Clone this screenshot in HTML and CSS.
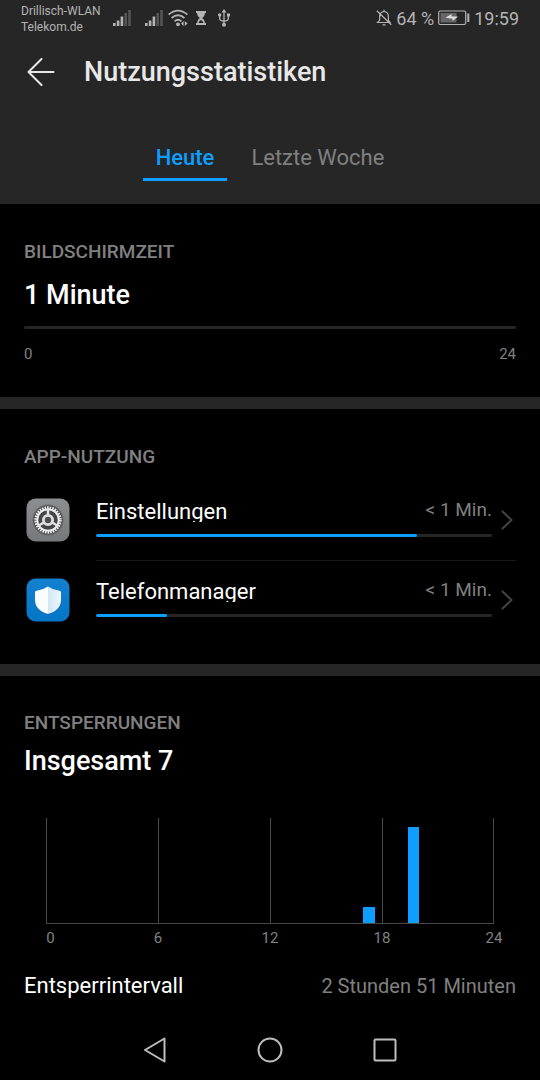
FILE: index.html
```html
<!DOCTYPE html>
<html lang="de">
<head>
<meta charset="utf-8">
<meta name="viewport" content="width=device-width, initial-scale=1">
<title>Nutzungsstatistiken</title>
<link rel="stylesheet" href="styles.css">
</head>
<body>
<div class="screen">
  <header class="header">
    <div class="status">
      <div class="carriers"><span>Drillisch-WLAN</span><span>Telekom.de</span></div>
      <svg class="signal" width="18" height="18" viewBox="0 0 18 18" aria-hidden="true">
        <path fill="#b4b4b4" d="M0 14h2.600v3H0zM3.800 11.500h2.600V17H3.800zM7.600 7.500h2.600V17H7.600z"/><path fill="#535655" d="M11.400 4h2.600v13h-2.600zM15.200 1h2.600v16h-2.600z"/>
      </svg>
      <svg class="signal" width="18" height="18" viewBox="0 0 18 18" aria-hidden="true">
        <path fill="#b4b4b4" d="M0 14h2.600v3H0zM3.800 11.500h2.600V17H3.800zM7.600 7.500h2.600V17H7.600z"/><path fill="#535655" d="M11.400 4h2.600v13h-2.600zM15.200 1h2.600v16h-2.600z"/>
      </svg>
      <svg class="wifi" width="20" height="18" viewBox="0 0 20 18" aria-hidden="true">
        <g fill="none" stroke="#b4b4b4" stroke-width="1.800"><path d="M.6 5.600Q10-2.400 19.400 5.600"/><path d="M3.600 9Q10 3.600 16.400 9"/><path d="M6.600 12.300Q10 9.300 13.400 12.300"/></g>
        <circle cx="10" cy="15.300" r="1.900" fill="#b4b4b4"/><path fill="#b4b4b4" d="M15.600 12v5L13 14.500zM16.800 12v5l2.800-2.500z"/>
      </svg>
      <svg class="glass" width="10" height="14" viewBox="0 0 10 14" aria-hidden="true">
        <path fill="#b4b4b4" d="M0 0h10v2H9q0 3-2.800 5Q9 9 9 12h1v2H0v-2h1q0-3 2.800-5Q1 5 1 2H0z"/><path fill="#262626" d="M2.600 12q.4-2 2.400-3 2 1 2.400 3z"/>
      </svg>
      <svg class="usb" width="12" height="18" viewBox="0 0 12 18" aria-hidden="true">
        <g fill="none" stroke="#b4b4b4" stroke-width="1.300"><path d="M6 2v14M1.700 6v3.500q0 2.500 4.300 2.500 4.300 0 4.300-2.500V6"/></g>
        <path fill="#b4b4b4" d="M6 0l2.500 3.500h-5zM9 4.500h3v3H9z"/><circle cx="1.700" cy="6" r="1.700" fill="#b4b4b4"/><circle cx="6" cy="15.800" r="2" fill="#b4b4b4"/>
      </svg>
      <div class="status-right">
        <svg width="16" height="18" viewBox="0 0 16 18" fill="none" stroke="#b4b4b4" stroke-width="1.200" aria-hidden="true">
          <path d="M1.500 13.500h12.500l-1.600-2.200V7.500Q12.400 3 8 2.500 3.600 3 3.600 7.500v3.800zM8 2.500V.8M6.500 15.800h3M.8 1.800l14.500 14"/>
        </svg>
        <span>64 %</span>
        <svg width="32" height="16" viewBox="0 0 32 16" aria-hidden="true">
          <rect x=".7" y="1" width="27" height="13.500" rx="1.500" fill="none" stroke="#b4b4b4" stroke-width="1.200"/>
          <path fill="#666" d="M2.500 3h16v9.500h-16z"/><path fill="#b4b4b4" d="M29.300 3.500h2v8.500h-2z"/>
          <path fill="#ddd" d="M13.500 4v2.600h6.500L14.500 11V8.800L7.500 7.800z"/>
        </svg>
        <span>19:59</span>
      </div>
    </div>
    <div class="title-bar">
      <button class="back" aria-label="Zurück">
        <svg width="28" height="28" viewBox="0 0 28 28" fill="none" stroke="#e8e8e8" stroke-width="2" stroke-linecap="round" stroke-linejoin="round"><path d="M14.500 1L1.500 14l13 13M1.500 14h25"/></svg>
      </button>
      <h1>Nutzungsstatistiken</h1>
    </div>
    <nav class="tabs">
      <button class="tab active">Heute</button>
      <button class="tab">Letzte Woche</button>
    </nav>
  </header>

  <main>
    <section class="card">
      <h2>BILDSCHIRMZEIT</h2>
      <p class="value time-value">1 Minute</p>
      <div class="track"></div>
      <div class="range"><span>0</span><span>24</span></div>
    </section>

    <section class="card apps">
      <h2>APP-NUTZUNG</h2>
      <ul>
        <li class="app">
          <svg class="app-icon" width="44" height="44" viewBox="0 0 44 44" aria-hidden="true">
            <defs><linearGradient id="gray" x2="0" y2="1"><stop stop-color="#8d8e90"/><stop offset="1" stop-color="#77787a"/></linearGradient></defs>
            <rect x=".5" y=".5" width="43" height="43" rx="9" fill="url(#gray)"/>
            <circle cx="22" cy="22" r="15.500" fill="#656668"/>
            <circle cx="22" cy="22" r="14.300" fill="#454547"/>
            <circle cx="22" cy="22" r="12.200" fill="none" stroke="#efefef" stroke-width="3" stroke-dasharray="1.600 .955"/>
            <circle cx="22" cy="22" r="10.700" fill="none" stroke="#efefef" stroke-width="1.800"/>
            <path d="M22 22V10M22 22l10 6M22 22l-10 6" stroke="#e4e4e4" stroke-width="2.400"/>
            <circle cx="22" cy="22" r="4.600" fill="#4d4d4f" stroke="#dedede" stroke-width="2.800"/>
          </svg>
          <div class="usage">
            <div class="usage-text"><span class="name">Einstellungen</span><span class="duration">&lt; 1 Min.</span></div>
            <div class="track"><div class="fill" style="width:81%"></div></div>
          </div>
          <svg class="chevron" width="12" height="20" viewBox="0 0 12 20" aria-hidden="true"><path d="M1 1l9.500 9L1 19"/></svg>
        </li>
        <li class="app">
          <svg class="app-icon" width="44" height="44" viewBox="0 0 44 44" aria-hidden="true">
            <defs>
              <linearGradient id="blue" x2="0" y2="1"><stop stop-color="#1480cf"/><stop offset="1" stop-color="#0475c7"/></linearGradient>
              <linearGradient id="half" x2="1" y2="0"><stop stop-color="#d3e6f3"/><stop offset="1" stop-color="#eef6fb"/></linearGradient>
            </defs>
            <rect x=".5" y=".5" width="43" height="43" rx="9" fill="url(#blue)"/>
            <path fill="#0868b0" d="M22 10q6 4 13 4.500v9q0 9-13 13.500Q9 32.500 9 23.500v-9q7-.5 13-4.500z"/>
            <path fill="#fafdff" d="M22 8.500q-5 3.500-11.500 4.200-1.500.2-1.500 1.800V22q0 10 13 14z"/>
            <path fill="url(#half)" d="M22 8.500q5 3.500 11.500 4.200 1.500.2 1.500 1.800V22q0 10-13 14z"/>
          </svg>
          <div class="usage">
            <div class="usage-text"><span class="name">Telefonmanager</span><span class="duration">&lt; 1 Min.</span></div>
            <div class="track"><div class="fill" style="width:18%"></div></div>
          </div>
          <svg class="chevron" width="12" height="20" viewBox="0 0 12 20" aria-hidden="true"><path d="M1 1l9.500 9L1 19"/></svg>
        </li>
      </ul>
    </section>

    <section class="card unlocks">
      <h2>ENTSPERRUNGEN</h2>
      <p class="value">Insgesamt 7</p>
      <div class="plot">
        <i class="grid-line q1"></i><i class="grid-line q2"></i><i class="grid-line q3"></i><i class="grid-line q4"></i>
        <i class="bar" style="grid-column:86/89;height:15%"></i>
        <i class="bar" style="grid-column:98/101;height:91%"></i>
      </div>
      <div class="axis"><span>0</span><span>6</span><span>12</span><span>18</span><span>24</span></div>
      <div class="interval"><span>Entsperrintervall</span><span class="interval-value">2 Stunden 51 Minuten</span></div>
    </section>
  </main>

  <nav class="system-nav">
    <button aria-label="Zurück"><svg width="24" height="26" viewBox="0 0 24 26"><path d="M21.500 1.500v23L2 13z"/></svg></button>
    <button aria-label="Startbildschirm"><svg width="26" height="26" viewBox="0 0 26 26"><circle cx="13" cy="13" r="11.500"/></svg></button>
    <button aria-label="Letzte Apps"><svg width="24" height="24" viewBox="0 0 24 24"><rect x="1.500" y="1.500" width="21" height="21" rx="1"/></svg></button>
  </nav>
</div>
</body>
</html>
```
FILE: styles.css
```css
* { box-sizing: border-box; }
body {
  margin: 0;
  background: #000;
  color: #fff;
  font-family: Roboto, "Noto Sans", sans-serif;
}
h1, h2, p, ul { margin: 0; padding: 0; }
ul { list-style: none; }
svg { display: block; flex: none; }
button {
  display: flex;
  padding: 0;
  border: 0;
  background: none;
  color: inherit;
  font: inherit;
}
.screen { min-height: 100vh; display: flex; flex-direction: column; }

.header { background: #262626; padding-bottom: 23px; }
.status {
  display: flex;
  align-items: center;
  height: 36px;
  padding: 0 21px;
  color: #b4b4b4;
}
.carriers {
  display: flex;
  flex-direction: column;
  padding-top: 1px;
  font-size: 12px;
  line-height: 16px;
  margin-right: 12px;
}
.signal { margin-right: 14px; }
.signal + .wifi { margin: 0 8px 0 -9px; }
.glass { margin-right: 12px; }
.status-right {
  display: flex;
  align-items: center;
  gap: 4px;
  margin-left: auto;
  font-size: 18px;
}
.title-bar {
  display: flex;
  align-items: center;
  gap: 29px;
  height: 72px;
  padding: 0 27px;
  color: #e8e8e8;
}
h1 { font-size: 27px; line-height: 32px; font-weight: 500; }
.tabs { display: flex; justify-content: center; gap: 11px; height: 73px; padding-top: 32px; }
.tab {
  padding: 4px 13px 0;
  border-bottom: 3px solid transparent;
  color: #808080;
  font-size: 22px;
  line-height: 28px;
}
.tab.active { border-color: #0d9eff; color: #0d9eff; font-weight: 500; }

.card { padding: 36px 24px 33px; }
.card + .card { border-top: 12px solid #262626; }
h2 { color: #808080; font-size: 19px; line-height: 24px; font-weight: 500; }
.value { font-size: 27px; line-height: 32px; font-weight: 500; }
.time-value { margin: 15px 0; }
.track { height: 3px; border-radius: 2px; background: #262626; overflow: hidden; }
.fill { height: 100%; border-radius: 2px; background: #0d9eff; }
.range {
  display: flex;
  justify-content: space-between;
  padding-top: 15px;
  color: #808080;
  font-size: 15px;
  line-height: 20px;
}

.apps { padding-bottom: 24px; }
.apps ul { padding-top: 11px; }
.app { display: grid; grid-template-columns: 72px 1fr 24px; align-items: center; height: 80px; position: relative; }
.app + .app::before {
  content: "";
  position: absolute;
  inset: 0 0 auto 72px;
  height: 1px;
  background: #181818;
}
.app-icon { margin-left: 2px; }
.usage { padding-bottom: 5px; }
.usage-text { display: flex; justify-content: space-between; margin-bottom: 12px; }
.name { height: 24px; overflow: hidden; font-size: 22px; line-height: 28px; }
.duration { padding-top: 2px; color: #808080; font-size: 19px; line-height: 20px; }
.chevron { justify-self: end; margin-right: 3px; fill: none; stroke: #444; stroke-width: 2; }

.unlocks { padding-bottom: 20px; }
.unlocks h2 { margin-top: -1px; }
.unlocks .value { margin: 10px 0 41px; }
.plot {
  display: grid;
  grid-template-columns: repeat(120, 1fr);
  height: 106px;
  margin: 0 22px;
  border-bottom: 1px solid #484848;
}
.grid-line { grid-row: 1; border-left: 1px solid #484848; }
.q1 { grid-column: 1 / 31; }
.q2 { grid-column: 31 / 61; }
.q3 { grid-column: 61 / 91; }
.q4 { grid-column: 91 / 121; border-right: 1px solid #484848; }
.bar { grid-row: 1; align-self: end; background: #0d9eff; }
.axis {
  display: flex;
  justify-content: space-between;
  padding: 4px 2px 0;
  color: #808080;
  font-size: 15px;
  line-height: 20px;
}
.axis span { width: 40px; text-align: center; }
.axis span:first-child { padding-left: 9px; }
.interval {
  display: flex;
  justify-content: space-between;
  align-items: center;
  padding-top: 24px;
  font-size: 22px;
  line-height: 28px;
}
.interval-value { color: #808080; font-size: 20px; }

.system-nav {
  display: flex;
  justify-content: center;
  align-items: center;
  gap: 90px;
  height: 60px;
  margin-top: auto;
}
.system-nav svg { fill: none; stroke: #bdbdbd; stroke-width: 2; stroke-linejoin: round; }
```
